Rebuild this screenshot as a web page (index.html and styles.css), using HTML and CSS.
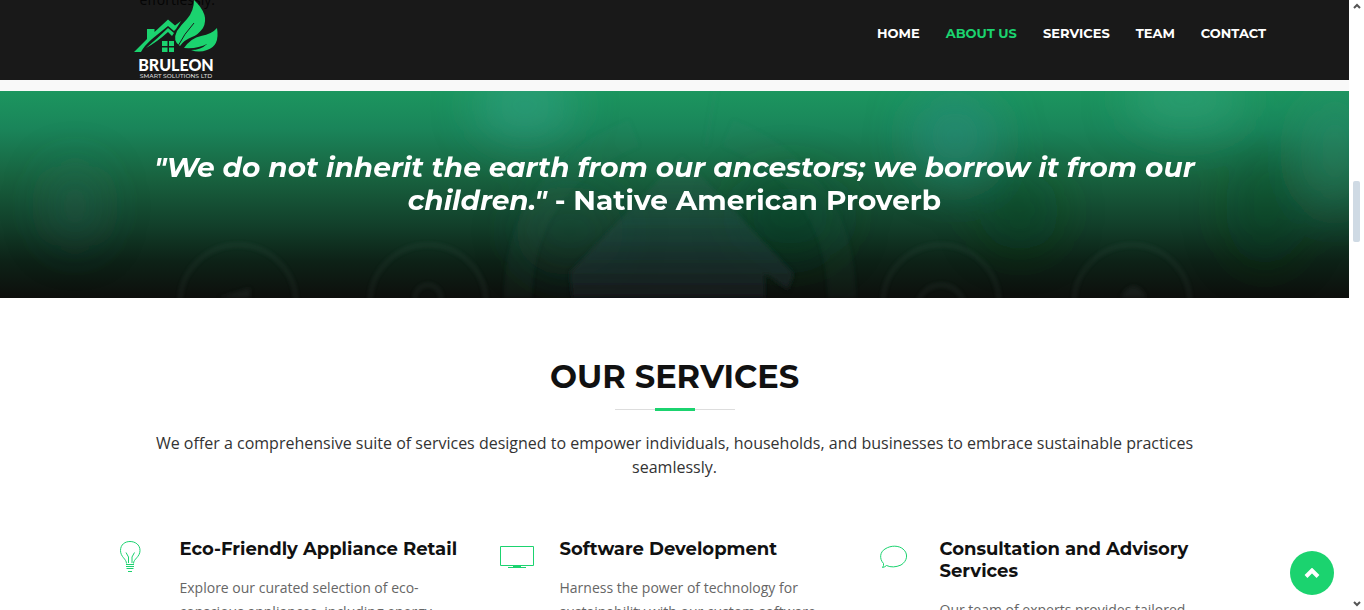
FILE: index.html
```html
<!DOCTYPE html>
<html lang="en">
<head>
<meta charset="utf-8">
<meta name="viewport" content="width=device-width, initial-scale=1">
<title>Bruleon Smart Solutions Ltd</title>
<link rel="stylesheet" href="styles.css">
</head>
<body>
<div class="page">
  <header class="header">
    <a class="logo" href="#home" aria-label="Bruleon Smart Solutions Ltd">
      <svg width="86" height="80" viewBox="0 0 86 80">
        <g fill="#1bd36f">
          <path d="M0 52L13 39V29H20.500V32L34 19.500L41 25.500L47 21L42 29L40 31L34 26L18 39Q10 46 7 52Z"/>
          <path d="M12 48Q24 38 34 28L40 33L38 36L34 32Q23 42 12 48Z"/>
          <path d="M28 41H33.500V46H28ZM35 41H40V46H35ZM28 47.500H33.500V52H28ZM35 47.500H40V52H35Z"/>
          <path d="M60 0Q76 15 69 28Q64 35 58 37Q50 40 46 46Q38 41 43 31Q48 24 53 19Q60 11 60 0Z"/>
          <path d="M83 28Q86 46 73 50Q65 53 57 50Q67 50 73 44Q64 49 50 48Q57 38 67 36Q78 34 83 28Z"/>
        </g>
        <path d="M44 46Q50 34 60 23" fill="none" stroke="#1a1a1a" stroke-width="1"/>
        <text x="42" y="71" class="logo-name">BRULEON</text>
        <text x="42" y="78" class="logo-tag">SMART SOLUTIONS LTD</text>
      </svg>
    </a>
    <nav class="nav">
      <a href="#home">HOME</a>
      <a class="active" href="#about">ABOUT US</a>
      <a href="#services">SERVICES</a>
      <a href="#team">TEAM</a>
      <a href="#contact">CONTACT</a>
    </nav>
  </header>

  <main>
    <section class="about" id="about">
      <div class="container"><p class="about-card">effortlessly.</p></div>
    </section>

    <section class="banner">
      <svg class="banner-art" viewBox="0 0 1349 207" preserveAspectRatio="xMidYMin slice" aria-hidden="true">
        <defs>
          <filter id="soft" x="-10%" y="-50%" width="120%" height="200%"><feGaussianBlur stdDeviation="22"/></filter>
          <filter id="edge"><feGaussianBlur stdDeviation="2"/></filter>
          <linearGradient id="roof" x1="0" y1="0" x2="0" y2="1">
            <stop offset="0" stop-color="#3d6b60" stop-opacity=".1"/>
            <stop offset=".5" stop-color="#254a45" stop-opacity=".5"/>
            <stop offset="1" stop-color="#17191b" stop-opacity=".9"/>
          </linearGradient>
        </defs>
        <g filter="url(#soft)">
          <ellipse cx="525" cy="14" rx="50" ry="36" fill="#3ba892" opacity=".45"/>
          <ellipse cx="955" cy="45" rx="45" ry="48" fill="#2d8e82" opacity=".5"/>
          <ellipse cx="1185" cy="8" rx="60" ry="32" fill="#38a782" opacity=".5"/>
          <ellipse cx="75" cy="115" rx="30" ry="42" fill="#286858" opacity=".3"/>
          <ellipse cx="1335" cy="60" rx="35" ry="60" fill="#318b72" opacity=".35"/>
          <ellipse cx="1265" cy="115" rx="40" ry="60" fill="#0a4a18" opacity=".3"/>
          <ellipse cx="1020" cy="120" rx="40" ry="40" fill="#044713" opacity=".35"/>
          <ellipse cx="790" cy="125" rx="55" ry="45" fill="#044420" opacity=".4"/>
          <ellipse cx="570" cy="140" rx="55" ry="45" fill="#255443" opacity=".25"/>
        </g>
        <g filter="url(#edge)">
          <path d="M682 65L794 183L788 199L765 182V207H572L570 181Z" fill="url(#roof)"/>
          <g fill="none" stroke="#498177" opacity=".08">
            <path d="M518 207Q519 88 634 42" stroke-width="28"/>
            <path d="M842 207Q840 87 728 42" stroke-width="28"/>
            <path d="M716 -5L706 55" stroke-width="4"/>
          </g>
          <g fill="none" stroke="#638078" stroke-width="3" opacity=".14">
            <circle cx="238" cy="212" r="58"/><circle cx="428" cy="212" r="58"/>
            <circle cx="941" cy="212" r="58"/><circle cx="1132" cy="212" r="58"/>
            <circle cx="428" cy="207" r="13"/><circle cx="941" cy="218" r="24"/>
          </g>
          <path d="M218 207L250 197V207ZM1120 207Q1134 183 1147 207Z" fill="#47514d" opacity=".2"/>
        </g>
      </svg>
      <h2 class="quote container"><em>"We do not inherit the earth from our ancestors; we borrow it from our children."</em> - Native American Proverb</h2>
    </section>

    <section class="services container" id="services">
      <h2 class="section-title">OUR SERVICES</h2>
      <p class="intro">We offer a comprehensive suite of services designed to empower individuals, households, and businesses to embrace sustainable practices seamlessly.</p>
      <div class="grid">
        <article class="card">
          <svg class="icon" width="36" height="36" viewBox="0 0 36 36" fill="none" stroke="#1bd36f" aria-hidden="true">
            <path d="M6.500 23.500C6.500 19 .500 17 .500 10.500C.500 4.500 5 1.500 10 1.500S20 4.500 20 10.500C20 17 13.500 19 13.500 23.500M8.500 23V17L6 12.500M12 23V17L14.500 12.500M6 24.500H14M6 26.500H14M6.500 28.500H13.500M8 31.500H12"/>
          </svg>
          <div class="card-body">
            <h3>Eco-Friendly Appliance Retail</h3>
            <p>Explore our curated selection of eco-conscious appliances, including energy-efficient</p>
          </div>
        </article>
        <article class="card">
          <svg class="icon" width="36" height="36" viewBox="0 0 36 36" fill="none" stroke="#1bd36f" aria-hidden="true">
            <path d="M.500 6.500H33.500V25.500H.500ZM8 27.500H26M13 26.500H21"/>
          </svg>
          <div class="card-body">
            <h3>Software Development</h3>
            <p>Harness the power of technology for sustainability with our custom software</p>
          </div>
        </article>
        <article class="card">
          <svg class="icon" width="36" height="36" viewBox="0 0 36 36" fill="none" stroke="#1bd36f" aria-hidden="true">
            <path d="M2.500 27.500Q4 25.500 3.500 23.500C-1 18.500 0 12 5 9C11 5 19 5.500 23 9C28.500 13.500 27.500 21 21 25Q13 28.500 6.500 25.500Q5 27 2.500 27.500Z"/>
          </svg>
          <div class="card-body">
            <h3>Consultation and Advisory Services</h3>
            <p>Our team of experts provides tailored</p>
          </div>
        </article>
      </div>
    </section>
  </main>
  <a class="to-top" href="#home" aria-label="Back to top">
    <svg width="16" height="10" viewBox="0 0 16 10" fill="none" stroke="#fff" stroke-width="4"><path d="M2 8.500L8 2.500L14 8.500"/></svg>
  </a>
</div>
<div class="scrollbar" aria-hidden="true">
  <svg width="8" height="6" viewBox="0 0 8 6" fill="none" stroke="#555" stroke-width="2"><path d="M1 5L4 2L7 5"/></svg>
  <div class="track"><div class="thumb"></div></div>
  <svg width="8" height="6" viewBox="0 0 8 6" fill="none" stroke="#555" stroke-width="2"><path d="M1 1L4 4L7 1"/></svg>
</div>
</body>
</html>
```
FILE: styles.css
```css
* { box-sizing: border-box; }

body {
  margin: 0;
  display: flex;
  height: 100vh;
  overflow: hidden;
  background: #fff;
  color: #666;
  font-family: "Open Sans", sans-serif;
}

h2, h3, p { margin: 0; }
a { text-decoration: none; }

.page {
  position: relative;
  flex: 1;
  min-width: 0;
  overflow: hidden;
}

.container {
  width: 100%;
  max-width: 1140px;
  margin: 0 auto;
  padding: 0 15px;
}

.header {
  position: absolute;
  z-index: 2;
  top: 0;
  left: 0;
  right: 0;
  height: 80px;
  padding: 0 83px 0 134px;
  display: flex;
  justify-content: space-between;
  background: rgba(0, 0, 0, .9);
}

.logo svg { display: block; }

.logo-name {
  font: 900 16px "Lato", sans-serif;
  fill: #fff;
  text-anchor: middle;
}

.logo-tag {
  font: 500 6px "Montserrat", "Inter", sans-serif;
  fill: #ddd;
  text-anchor: middle;
}

.nav {
  display: flex;
  gap: 26px;
  padding-top: 23px;
  font: 700 13px/20px "Montserrat", "Inter", sans-serif;
}

.nav a { color: #fff; }
.nav .active { color: #1bd36f; }

.about {
  height: 91px;
  overflow: hidden;
  background: #f9f9f9;
}

.about-card {
  margin-top: -12px;
  padding: 0 20px 20px;
  font-size: 14px;
  line-height: 24px;
  color: #333;
}

.banner {
  position: relative;
  padding: 60px 0 81px;
  background: linear-gradient(#1c965f 0%, #1a855a 18%, #18623f 42%, #123f2a 65%, #0d2217 82%, #0d0f0c 100%);
}

.banner-art {
  position: absolute;
  inset: 0;
  width: 100%;
  height: 100%;
}

.quote {
  position: relative;
  color: #fff;
  font: 700 28px/33px "Montserrat", "Inter", sans-serif;
  text-align: center;
}

.services { padding-top: 59px; }

.section-title {
  position: relative;
  padding-bottom: 13px;
  color: #111;
  font: 700 32px/40px "Montserrat", "Inter", sans-serif;
  text-align: center;
}

.section-title::before,
.section-title::after {
  content: "";
  position: absolute;
  left: 50%;
  transform: translateX(-50%);
}

.section-title::before {
  bottom: 0;
  width: 120px;
  height: 1px;
  background: #ddd;
}

.section-title::after {
  bottom: -1px;
  width: 40px;
  height: 3px;
  background: #1bd36f;
}

.intro {
  padding: 21px 30px 59px;
  color: #333;
  font-size: 16px;
  line-height: 24px;
  text-align: center;
}

.grid {
  display: grid;
  grid-template-columns: repeat(3, 1fr);
  gap: 30px;
}

.card {
  display: flex;
  gap: 24px;
}

.icon { flex: none; margin-top: 2px; }

.card-body { flex: 1; }

.card h3 {
  margin-bottom: 16px;
  color: #111;
  font: 700 18px/22px "Montserrat", "Inter", sans-serif;
}

.card p {
  font-size: 14px;
  line-height: 24px;
}

.to-top {
  position: absolute;
  right: 15px;
  bottom: 15px;
  width: 44px;
  height: 44px;
  border-radius: 50%;
  display: flex;
  align-items: center;
  justify-content: center;
  background: #1bd36f;
}

.scrollbar {
  flex: none;
  width: 15px;
  padding: 3px 0;
  display: flex;
  flex-direction: column;
  align-items: center;
}

.track {
  flex: 1;
  display: flex;
  flex-direction: column;
}

.track::before {
  content: "";
  flex: 172 0 0;
}

.track::after {
  content: "";
  flex: 359 0 0;
}

.thumb {
  flex: 61 0 0;
  width: 7px;
  border-radius: 2px;
  background: #cfdae4;
}
```
